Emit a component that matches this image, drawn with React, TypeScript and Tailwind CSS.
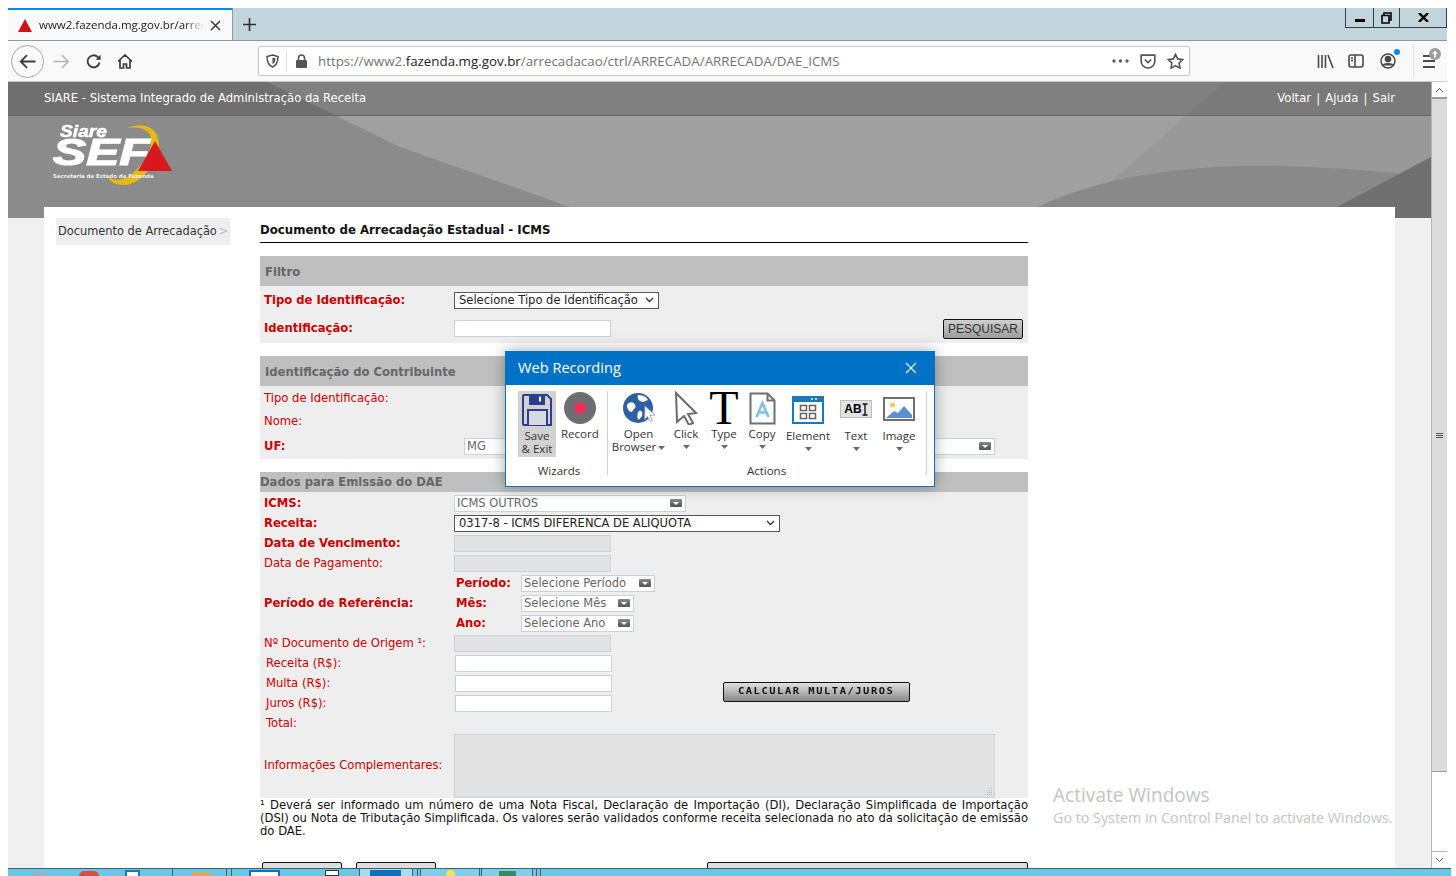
import React from "react";

const VERDANA = "font-['DejaVu_Sans',sans-serif]";
const UI = "font-['Open_Sans',sans-serif]";

const RED = "text-[#cc0000]";

const ArrowBox: React.FC = () => (
  <span className="flex h-[8px] w-[12px] shrink-0 items-center justify-center rounded-[1px] bg-gradient-to-b from-[#8a8a8a] to-[#555555]">
    <svg width="6" height="3" viewBox="0 0 6 3">
      <path d="M0 0h6L3 3z" fill="#ffffff" />
    </svg>
  </span>
);

const Chevron: React.FC = () => (
  <svg width="9" height="6" viewBox="0 0 9 6" fill="none" stroke="#333333" strokeWidth="1.3">
    <path d="M1 1l3.5 3.5L8 1" />
  </svg>
);

const FakeCombo: React.FC<{ text: string; className: string }> = ({ text, className }) => (
  <div className={`flex h-[17px] items-center justify-between border border-[#c6d3dd] bg-white pl-[2px] pr-[3px] text-[11.5px] text-[#666666] ${className}`}>
    <span className="whitespace-nowrap pt-[1px]">{text}</span>
    <ArrowBox />
  </div>
);

const NativeSelect: React.FC<{ text: string; className: string }> = ({ text, className }) => (
  <div className={`flex h-[17px] items-center justify-between border border-[#555555] bg-white pl-[4px] pr-[4px] text-[11.5px] text-[#222222] ${className}`}>
    <span className="whitespace-nowrap pt-[1px]">{text}</span>
    <Chevron />
  </div>
);

const Field: React.FC<{ disabled?: boolean; className?: string }> = ({ disabled, className = "" }) => (
  <div className={`h-[17px] w-[157px] border border-[#c6d3dd] ${disabled ? "bg-[#e2e2e2]" : "bg-white"} ${className}`} />
);

const Row: React.FC<{ label?: string; bold?: boolean; indent?: boolean; children?: React.ReactNode }> = ({
  label,
  bold,
  indent,
  children,
}) => (
  <div className="flex h-[20px] items-center">
    <div className={`w-[194px] shrink-0 whitespace-nowrap pt-[1px] ${indent ? "pl-[6px]" : "pl-[4px]"} ${RED} ${bold ? "font-bold" : ""}`}>{label}</div>
    {children}
  </div>
);

const SectionTitle: React.FC<{ text: string; className: string }> = ({ text, className }) => (
  <div className={`flex items-center bg-[#bfbfbf] font-bold text-[#666666] ${className}`}>{text}</div>
);

const PeriodLabel: React.FC<{ text: string }> = ({ text }) => (
  <div className={`ml-[2px] w-[65px] shrink-0 pt-[1px] font-bold ${RED}`}>{text}</div>
);

const BrowserTabs: React.FC = () => (
  <div className="flex h-[33px] items-stretch justify-between border-b border-[#8d9ba1] bg-[#c3d5dc]">
    <div className="flex">
      <div className="flex w-[225px] items-center border-r border-[#8d9ba1] border-t-2 border-t-[#0a84ff] bg-[#f9f9fa] pl-[10px]">
        <svg width="14" height="13" viewBox="0 0 14 13">
          <path d="M7 0l7 13H0z" fill="#cc1417" />
        </svg>
        <span className={`${UI} ml-[7px] w-[165px] overflow-hidden whitespace-nowrap text-[11.5px] text-[#222222] [mask-image:linear-gradient(to_right,black_88%,transparent)]`}>
          www2.fazenda.mg.gov.br/arrec
        </span>
        <svg width="11" height="11" viewBox="0 0 11 11" stroke="#3a3a3a" strokeWidth="1.5" className="ml-[6px]">
          <path d="M1 1l9 9M10 1l-9 9" />
        </svg>
      </div>
      <div className="flex w-[32px] items-center justify-center">
        <svg width="15" height="15" viewBox="0 0 15 15" stroke="#2e2e2e" strokeWidth="1.6">
          <path d="M7.5 1v13M1 7.5h13" />
        </svg>
      </div>
    </div>
    <div className="flex h-[20px] border-x border-b border-[#333f44] text-black">
      <div className="flex w-[28px] items-end justify-center border-r border-[#333f44] pb-[5px]">
        <div className="h-[3px] w-[10px] bg-black" />
      </div>
      <div className="flex w-[26px] items-center justify-center border-r border-[#333f44]">
        <svg width="11" height="12" viewBox="0 0 11 12" fill="none" stroke="#000000" strokeWidth="1.6">
          <path d="M3 3V1h7v7H8" />
          <path d="M1 3.5h7V11H1z" />
        </svg>
      </div>
      <div className="flex w-[46px] items-center justify-center">
        <svg width="11" height="9" viewBox="0 0 11 9" stroke="#000000" strokeWidth="2.4">
          <path d="M1 0l9 9M10 0L1 9" />
        </svg>
      </div>
    </div>
  </div>
);

const BrowserToolbar: React.FC = () => (
  <div className="flex h-[41px] items-center border-b border-[#cccccc] bg-[#f9f9fa] pl-[3px]">
    <div className="flex h-[33px] w-[33px] items-center justify-center rounded-full border border-[#a8a8a8] bg-[#f9f9fa]">
      <svg width="17" height="15" viewBox="0 0 17 15" fill="none" stroke="#3d3d3d" strokeWidth="1.8">
        <path d="M16.5 7.5H2M8 1.2L1.7 7.5 8 13.8" />
      </svg>
    </div>
    <svg width="17" height="15" viewBox="0 0 17 15" fill="none" stroke="#b3b3b3" strokeWidth="1.6" className="ml-[9px]">
      <path d="M.5 7.5H15M9 1.2l6.3 6.3L9 13.8" />
    </svg>
    <svg width="16" height="15" viewBox="0 0 16 15" fill="none" stroke="#3d3d3d" strokeWidth="1.9" className="ml-[16px]">
      <path d="M13.5 8.5a6 6 0 1 1-1.6-5.4L14 5" />
      <path d="M14.6.7v5h-5" fill="#3d3d3d" stroke="none" />
    </svg>
    <svg width="16" height="15" viewBox="0 0 16 15" fill="none" stroke="#3d3d3d" strokeWidth="1.7" className="ml-[15px]">
      <path d="M1 7.5L8 1l7 6.5M3 6v8h3.5v-4h3v4H13V6" />
    </svg>
    <div className={`${UI} ml-[125px] flex h-[30px] w-[932px] items-center rounded-[2px] border border-[#c6c6c6] bg-white text-[13.35px]`}>
      <svg width="13" height="14" viewBox="0 0 13 14" fill="none" className="ml-[7px]">
        <path d="M6.5 1L12 2.5C12 8 10 11.5 6.5 13 3 11.5 1 8 1 2.5z" stroke="#4f4f4f" strokeWidth="1.5" />
        <path d="M6.5 3.5L9.5 4.3c0 3-1 5-3 6z" fill="#4f4f4f" />
      </svg>
      <div className="ml-[7px] h-[22px] w-px bg-[#e2e2e2]" />
      <svg width="13" height="14" viewBox="0 0 13 14" className="ml-[8px]">
        <path d="M3.5 6V4a3 3 0 0 1 6 0v2" fill="none" stroke="#555555" strokeWidth="1.6" />
        <rect x="1" y="6" width="11" height="8" rx="1" fill="#555555" />
      </svg>
      <span className="ml-[10px] whitespace-nowrap text-[#737373]">
        https://www2.<span className="text-[#1e1e1e]">fazenda.mg.gov.br</span>/arrecadacao/ctrl/ARRECADA/ARRECADA/DAE_ICMS
      </span>
      <div className="ml-auto flex items-center">
        <svg width="17" height="4" viewBox="0 0 17 4" fill="#5c5c5c">
          <circle cx="2" cy="2" r="1.7" />
          <circle cx="8.5" cy="2" r="1.7" />
          <circle cx="15" cy="2" r="1.7" />
        </svg>
        <svg width="16" height="15" viewBox="0 0 16 15" fill="none" stroke="#555555" strokeWidth="1.7" className="ml-[11px]">
          <path d="M1.2 1.2h13.6v6a6.8 6.8 0 0 1-13.6 0z" />
          <path d="M4.8 5.5L8 8.5l3.2-3" />
        </svg>
        <svg width="17" height="16" viewBox="0 0 17 16" fill="none" stroke="#555555" strokeWidth="1.6" className="ml-[11px] mr-[5px]">
          <path d="M8.5 1.3l2.2 4.6 5 .7-3.6 3.5.9 5-4.5-2.4L4 15.1l.9-5L1.3 6.6l5-.7z" />
        </svg>
      </div>
    </div>
    <div className="ml-[127px] flex items-center">
      <svg width="17" height="15" viewBox="0 0 17 15" stroke="#4a4a4a" strokeWidth="1.6">
        <path d="M1.5 1v13M5 1v13M8.5 1v13M11 1l5 13" />
      </svg>
      <svg width="16" height="14" viewBox="0 0 16 14" fill="none" stroke="#4a4a4a" strokeWidth="1.6" className="ml-[14px]">
        <rect x="1" y="1" width="14" height="12" rx="2" />
        <path d="M7 1v12M3 4h2M3 6.5h2" />
      </svg>
      <div className="relative ml-[16px] h-[16px] w-[16px]">
        <svg width="16" height="16" viewBox="0 0 16 16" fill="none" stroke="#4a4a4a" strokeWidth="1.5">
          <circle cx="8" cy="8" r="7" />
          <circle cx="8" cy="6" r="2.6" fill="#4a4a4a" />
          <path d="M3 12.5c1-2.5 9-2.5 10 0" fill="#4a4a4a" />
        </svg>
        <div className="absolute right-[-4px] top-[-4px] h-[6px] w-[6px] rounded-full bg-[#0a84ff]" />
      </div>
      <div className="ml-[17px] h-[34px] w-px bg-[#e2e2e2]" />
      <div className="relative ml-[9px] flex h-[13px] w-[12px] flex-col justify-between">
        <div className="h-[2px] w-[7px] bg-[#4a4a4a]" />
        <div className="h-[2px] w-[12px] bg-[#4a4a4a]" />
        <div className="h-[2px] w-[12px] bg-[#4a4a4a]" />
        <svg width="12" height="12" viewBox="0 0 12 12" className="absolute right-[-6px] top-[-7px]">
          <circle cx="6" cy="6" r="6" fill="#9c9c9c" />
          <path d="M6 2.5L9 6H7v3.5H5V6H3z" fill="#ffffff" />
        </svg>
      </div>
    </div>
  </div>
);

const SiteHeader: React.FC = () => (
  <div className={`${VERDANA} relative h-[136px] shrink-0 overflow-hidden bg-[#8b8b8b] text-white`}>
    <svg width="1423" height="136" viewBox="0 0 1423 136" className="absolute left-0 top-0">
      <path d="M259 0L392 65L562 125L570 136H1423V0z" fill="#a0a0a0" />
      <path d="M1217 0L1074 125L1068 136H1423V0z" fill="#999999" />
      <path d="M1030 125C1100 90 1200 82 1274 84C1330 86 1390 90 1423 96V136H1010z" fill="#898989" />
      <path d="M1329 125L1423 75V136H1320z" fill="#6f6f6f" />
    </svg>
    <div className="relative flex h-[34px] items-center justify-between border-b border-[#666666] bg-black/20 pl-[36px] pr-[36px]">
      <span>SIARE - Sistema Integrado de Administração da Receita</span>
      <span className="[word-spacing:1.5px]">Voltar | Ajuda | Sair</span>
    </div>
    <div className="relative ml-[45px] mt-[7px] h-[65px] w-[122px]">
      <svg width="122" height="65" viewBox="0 0 122 65" className="absolute left-0 top-0">
        <path d="M75 5C85 0 104 0 106 20C106 40 85 64 70 62C62 62 56 58 55 54C62 58 72 58 80 50C92 40 100 25 98 14C96 6 85 3 75 5z" fill="#e5b90f" />
      </svg>
      <span className="absolute left-[7px] top-[1px] origin-left scale-x-[1.2] font-['Liberation_Sans',sans-serif] text-[16px] font-bold italic leading-[16px] text-white [-webkit-text-stroke:0.5px_white]">
        Siare
      </span>
      <span className="absolute left-[0px] top-[10px] origin-left scale-x-[1.38] font-['Liberation_Sans',sans-serif] text-[36px] font-bold italic leading-[40px] text-white [-webkit-text-stroke:1.2px_white]">
        SEF
      </span>
      <svg width="34" height="30" viewBox="0 0 34 30" className="absolute left-[85px] top-[18px]">
        <path d="M17 0l17 30H0z" fill="#d7191f" />
      </svg>
      <span className="absolute left-[0px] top-[49px] whitespace-nowrap text-[5.45px] font-bold leading-[8px] text-[#f0f0f0]">
        Secretaria de Estado de Fazenda
      </span>
    </div>
  </div>
);

const FiltroSection: React.FC = () => (
  <>
    <SectionTitle text="Filtro" className="mt-[13px] h-[30px] pl-[5px] pt-[3px]" />
    <div className="h-[57px] bg-[#eeeeee]">
      <div className="flex h-[28px] items-center">
        <div className={`w-[194px] pl-[4px] pt-[1px] font-bold ${RED}`}>Tipo de Identificação:</div>
        <NativeSelect text="Selecione Tipo de Identificação" className="w-[205px]" />
      </div>
      <div className="flex h-[29px] items-center justify-between pr-[5px]">
        <div className="flex items-center">
          <div className={`w-[194px] pl-[4px] pt-[1px] font-bold ${RED}`}>Identificação:</div>
          <Field />
        </div>
        <div className="flex h-[20px] w-[80px] items-center justify-center rounded-[2px] border border-[#111111] bg-gradient-to-b from-[#d0d0d0] to-[#9c9c9c] font-['Liberation_Sans',sans-serif] text-[12px] text-[#333333]">
          PESQUISAR
        </div>
      </div>
    </div>
  </>
);

const ContribuinteSection: React.FC = () => (
  <>
    <SectionTitle text="Identificação do Contribuinte" className="mt-[13px] h-[30px] pl-[5px] pt-[3px]" />
    <div className="h-[73px] bg-[#eeeeee]">
      <div className={`flex h-[24px] items-center pl-[4px] pt-[1px] ${RED}`}>Tipo de Identificação:</div>
      <div className={`flex h-[23px] items-center pl-[4px] ${RED}`}>Nome:</div>
      <div className="flex h-[26px] items-center">
        <div className={`w-[204px] pl-[4px] pt-[1px] font-bold ${RED}`}>UF:</div>
        <FakeCombo text="MG" className="w-[531px]" />
      </div>
    </div>
  </>
);

const DadosSection: React.FC = () => (
  <>
    <SectionTitle text="Dados para Emissão do DAE" className="mt-[13px] h-[20px] pt-[2px]" />
    <div className="h-[306px] bg-[#eeeeee]">
      <div className="h-[1px]" />
      <Row label="ICMS:" bold>
        <FakeCombo text="ICMS OUTROS" className="w-[232px]" />
      </Row>
      <Row label="Receita:" bold>
        <NativeSelect text="0317-8 - ICMS DIFERENCA DE ALIQUOTA" className="w-[326px]" />
      </Row>
      <Row label="Data de Vencimento:" bold>
        <Field disabled />
      </Row>
      <Row label="Data de Pagamento:">
        <Field disabled />
      </Row>
      <Row>
        <PeriodLabel text="Período:" />
        <FakeCombo text="Selecione Período" className="w-[134px]" />
      </Row>
      <Row label="Período de Referência:" bold>
        <PeriodLabel text="Mês:" />
        <FakeCombo text="Selecione Mês" className="w-[113px]" />
      </Row>
      <Row>
        <PeriodLabel text="Ano:" />
        <FakeCombo text="Selecione Ano" className="w-[113px]" />
      </Row>
      <Row label="Nº Documento de Origem ¹:">
        <Field disabled />
      </Row>
      <Row label="Receita (R$):" indent>
        <Field className="ml-[1px]" />
      </Row>
      <Row label="Multa (R$):" indent>
        <Field className="ml-[1px]" />
        <div className="ml-[111px] mt-[18px] flex h-[20px] w-[187px] items-center justify-center rounded-[2px] border border-[#111111] bg-gradient-to-b from-[#e0e0e0] to-[#8a8a8a] font-['DejaVu_Sans_Mono',monospace] text-[8px] font-bold text-[#111111]">
          <span className="scale-x-[1.3] whitespace-nowrap tracking-[1.2px]">CALCULAR MULTA/JUROS</span>
        </div>
      </Row>
      <Row label="Juros (R$):" indent>
        <Field className="ml-[1px]" />
      </Row>
      <Row label="Total:" indent />
      <div className="flex h-[65px] items-center">
        <div className={`w-[194px] shrink-0 whitespace-nowrap pl-[4px] pt-[1px] ${RED}`}>Informações Complementares:</div>
        <div className="relative h-[64px] w-[541px] border border-[#c6d3dd] bg-[#e2e2e2]">
          <svg width="8" height="8" viewBox="0 0 8 8" fill="#b5b5b5" className="absolute bottom-[1px] right-[1px]">
            <path d="M6 0h1v1H6zM4 2h1v1H4zM6 2h1v1H6zM2 4h1v1H2zM4 4h1v1H4zM6 4h1v1H6zM0 6h1v1H0zM2 6h1v1H2zM4 6h1v1H4zM6 6h1v1H6z" />
          </svg>
        </div>
      </div>
    </div>
  </>
);

const Caret: React.FC<{ className?: string }> = ({ className = "" }) => (
  <svg width="7" height="4" viewBox="0 0 7 4" className={className}>
    <path d="M0 0h7L3.5 4z" fill="#6a6a6a" />
  </svg>
);

const Tool: React.FC<{
  label: React.ReactNode;
  caret?: boolean;
  className?: string;
  labelClass?: string;
  children: React.ReactNode;
}> = ({ label, caret, className = "", labelClass = "mt-[2px]", children }) => (
  <div className={`flex flex-col items-center ${className}`}>
    <div className="flex h-[34px] items-center justify-center">{children}</div>
    <div className={`whitespace-nowrap text-center leading-[13px] ${labelClass}`}>{label}</div>
    {caret && <Caret className="mt-[5px]" />}
  </div>
);

const WebRecording: React.FC = () => (
  <div className={`${UI} absolute left-[505px] top-[351px] h-[136px] w-[430px] border border-[#0072c6] bg-white text-[11.5px] text-[#333333] shadow-[0_0_14px_rgba(0,0,0,0.35)]`}>
    <div className="flex h-[33px] items-center justify-between bg-[#0072c6] pb-[2px] pl-[12px] pr-[17px] text-[14.6px] text-white">
      <span>Web Recording</span>
      <svg width="12" height="12" viewBox="0 0 12 12" stroke="#ffffff" strokeWidth="1.1">
        <path d="M1 1l10 10M11 1L1 11" />
      </svg>
    </div>
    <div className="flex h-[102px]">
      <div className="flex w-[101px] flex-col pl-[12px] pt-[6px]">
        <div className="flex">
          <div className="flex h-[66px] w-[38px] flex-col items-center bg-[#d2d2d2] pt-[3px]">
            <svg width="30" height="32" viewBox="0 0 30 32" fill="none" stroke="#2c3e8f" strokeWidth="2">
              <path d="M2 1h23l4 4v26H2a1 1 0 0 1-1-1V2a1 1 0 0 1 1-1z" />
              <path d="M8 1v9h14V1" fill="#2c3e8f" />
              <path d="M17 2.5h2v5h-2z" fill="#ffffff" stroke="none" />
              <path d="M6 31V16h19v15" fill="#d9d9e2" />
            </svg>
            <div className="mt-[3px] text-center leading-[13px]">
              Save
              <br />
              &amp; Exit
            </div>
          </div>
          <div className="ml-[5px] mt-[1px] flex flex-col items-center">
            <svg width="32" height="32" viewBox="0 0 32 32">
              <circle cx="16" cy="16" r="16" fill="#6d6e71" />
              <circle cx="16" cy="16" r="6" fill="#ef3055" />
            </svg>
            <div className="mt-[1px] whitespace-nowrap">Record</div>
          </div>
        </div>
        <div className="mt-[5px] w-[82px] text-center">Wizards</div>
      </div>
      <div className="my-[6px] h-[84px] w-px bg-[#cfcfcf]" />
      <div className="flex w-[319px] flex-col">
        <div className="flex h-[76px] pt-[6px]">
          <Tool
            className="ml-[5px] w-[51px]"
            label={
              <>
                Open
                <br />
                Browser
                <Caret className="ml-[2px] inline align-middle" />
              </>
            }
          >
            <svg width="34" height="34" viewBox="0 0 34 34">
              <circle cx="16" cy="17" r="15" fill="#2f5fa3" />
              <path d="M5 14c3-4 7-3 8 0 2 3-2 4-3 7-3 0-5-3-5-7zM16 4c4 0 8 1 10 5-3 1-5 3-8 1-2-1-3-4-2-6zM17 20c3-1 4 2 3 5-1 2-3 3-4 4-1-3-1-7 1-9z" fill="#ffffff" />
              <path d="M23 15l10 9-5 .5 2.500 5-2.500 1-2.500-5-3 3z" fill="#ffffff" stroke="#9a9a9a" strokeWidth="0.8" />
            </svg>
          </Tool>
          <Tool className="ml-[4px] w-[36px]" label="Click" caret>
            <svg width="24" height="34" viewBox="0 0 24 34" fill="#ffffff" stroke="#6a6a6a" strokeWidth="2">
              <path d="M2 2l20 20-8 1 5 9-4 2-5-9-7 6z" />
            </svg>
          </Tool>
          <Tool className="ml-[2px] w-[36px]" label="Type" caret>
            <span className="font-['Liberation_Serif',serif] text-[48px] leading-[34px] text-black">T</span>
          </Tool>
          <Tool className="ml-[1px] w-[38px]" label="Copy" caret>
            <svg width="27" height="33" viewBox="0 0 27 33" fill="none">
              <path d="M1.500 1.500h17l7 7v23h-24z" stroke="#6f6f6f" strokeWidth="2" fill="#ffffff" />
              <path d="M18.500 1.500v7h7" stroke="#6f6f6f" strokeWidth="2" />
              <path d="M7.500 25l6-14 6 14M9.500 20.500h8" stroke="#7cbfe8" strokeWidth="2.500" />
            </svg>
          </Tool>
          <Tool className="ml-[4px] w-[46px]" labelClass="mt-[4px]" label="Element" caret>
            <svg width="32" height="28" viewBox="0 0 32 28" fill="none" className="mt-[4px]">
              <rect width="32" height="28" fill="#1a78bd" />
              <rect x="2" y="6" width="28" height="20" fill="#ffffff" />
              <circle cx="20" cy="3" r="1" fill="#ffffff" />
              <circle cx="24" cy="3" r="1" fill="#ffffff" />
              <circle cx="28" cy="3" r="1" fill="#ef3055" />
              <path d="M8.500 9.500h6v5h-6zM17.500 9.500h6v5h-6zM8.500 17.500h6v5h-6zM17.500 17.500h6v5h-6z" stroke="#666666" strokeWidth="1.500" />
            </svg>
          </Tool>
          <Tool className="ml-[5px] w-[40px]" labelClass="mt-[4px]" label="Text" caret>
            <div className="mt-[2px] flex h-[18px] w-[32px] items-center justify-center border border-[#bdbdbd] bg-[#e3e3e3] font-['Liberation_Sans',sans-serif] text-[12px] font-bold leading-none text-black">
              AB
              <svg width="6" height="13" viewBox="0 0 6 13" stroke="#111111" strokeWidth="1.4" fill="none">
                <path d="M.5 1h5M3 1v11M.5 12h5" />
              </svg>
            </div>
          </Tool>
          <Tool className="ml-[3px] w-[40px]" labelClass="mt-[4px]" label="Image" caret>
            <svg width="32" height="24" viewBox="0 0 32 24" fill="none" className="mt-[2px]">
              <rect x="1" y="1" width="30" height="22" stroke="#6f6f6f" strokeWidth="2" fill="#ffffff" />
              <circle cx="9.500" cy="8" r="2.500" fill="#f0cf65" />
              <path d="M3 21l8-7 4 2 6-7 8 9v3z" fill="#5b8fd0" />
            </svg>
          </Tool>
        </div>
        <div className="mt-[1px] pr-[2px] text-center">Actions</div>
      </div>
      <div className="my-[6px] ml-[-1px] h-[84px] w-px bg-[#cfcfcf]" />
    </div>
  </div>
);

const Scrollbar: React.FC = () => (
  <div className="flex w-[16px] shrink-0 flex-col border-l border-[#b5b5b5] bg-white">
    <div className="flex h-[17px] items-center justify-center border-b-2 border-[#9a9a9a]">
      <svg width="9" height="6" viewBox="0 0 9 6" fill="none" stroke="#555555">
        <path d="M1 5l3.500-3.500L8 5" />
      </svg>
    </div>
    <div className="flex h-[673px] items-center justify-center border-b border-[#9a9a9a] bg-[#dcdcdc]">
      <div className="flex flex-col gap-[1px]">
        <div className="h-px w-[7px] bg-[#555555]" />
        <div className="h-px w-[7px] bg-[#555555]" />
        <div className="h-px w-[7px] bg-[#555555]" />
      </div>
    </div>
    <div className="flex-1" />
    <div className="flex h-[17px] items-center justify-center border-t border-[#b5b5b5]">
      <svg width="9" height="6" viewBox="0 0 9 6" fill="none" stroke="#555555">
        <path d="M1 1l3.500 3.500L8 1" />
      </svg>
    </div>
  </div>
);

const Taskbar: React.FC = () => (
  <div className="relative flex h-[8px] shrink-0 overflow-hidden border-t border-[#505a60] bg-[#66c9ea]">
    <div className="ml-[24px] mt-[3px] h-[4px] w-[14px] bg-[#8fb7c4]" />
    <div className="ml-[33px] mt-[2px] h-[5px] w-[20px] rounded-t-full bg-[#d9503f]" />
    <div className="ml-[26px] mt-[1px] h-[6px] w-[15px] border-x-2 border-t-2 border-[#1b78c2] bg-white" />
    <div className="ml-[32px] h-full w-px bg-[#505a60]" />
    <div className="ml-[18px] mt-[3px] h-[4px] w-[20px] rounded-t-full bg-[#d9a95c]" />
    <div className="ml-[15px] h-full w-px bg-[#505a60]" />
    <div className="ml-[4px] h-full w-px bg-[#505a60]" />
    <div className="ml-[17px] mt-[1px] h-[6px] w-[31px] border-x-2 border-t-2 border-[#0b72c0] bg-white" />
    <div className="ml-[45px] mt-[1px] h-[6px] w-[14px] border border-[#333333] bg-white" />
    <div className="ml-[20px] h-full w-[54px] border-x border-[#505a60] bg-[#a3dff3] pl-[10px]">
      <div className="mt-[1px] h-[6px] w-[31px] bg-[#0b72c0]" />
    </div>
    <div className="ml-[4px] h-full w-px bg-[#505a60]" />
    <div className="ml-[2px] flex h-full w-[60px] justify-center border-x border-[#505a60] bg-[#7ad1ee]">
      <div className="mt-[1px] h-[6px] w-[9px] rounded-t-full bg-[#f5e34d]" />
    </div>
    <div className="ml-[1px] flex h-full w-[52px] justify-center border-x border-[#505a60] bg-[#7ad1ee]">
      <div className="mt-[2px] h-[5px] w-[17px] bg-[#2f8f5b]" />
    </div>
    <div className="ml-[3px] h-full w-px bg-[#505a60]" />
    <div className="ml-[3px] h-full w-px bg-[#505a60]" />
    <div className="absolute left-[1382px] top-[4px] font-['Open_Sans',sans-serif] text-[11px] leading-[14px] text-black">1:17 PM</div>
  </div>
);

export default function App() {
  return (
    <div className="relative h-[876px] w-[1456px] overflow-hidden bg-white pl-[8px] pt-[8px]">
      <div className="flex h-[860px] w-[1439px] flex-col">
        <BrowserTabs />
        <BrowserToolbar />
        <div className="flex min-h-0 flex-1">
          <div className={`${VERDANA} flex min-w-0 flex-1 flex-col bg-[#f0f0f0] text-[11.6px] text-[#222222]`}>
            <SiteHeader />
            <div className="relative -mt-[11px] ml-[36px] flex h-[661px] w-[1351px] overflow-hidden bg-white">
              <div className="ml-[12px] mt-[11px] flex h-[27px] w-[174px] shrink-0 items-center justify-between bg-[#eeeeee] pl-[2px] pr-[2px] text-[11.4px] text-[#333333]">
                <span className="whitespace-nowrap pt-[1px]">Documento de Arrecadação</span>
                <span className="text-[#bbbbbb]">&gt;</span>
              </div>
              <div className="ml-[30px] w-[768px] shrink-0 pt-[13px]">
                <div className="h-[23px] border-b border-black text-[11.75px] font-bold leading-[20px] text-[#111111]">
                  Documento de Arrecadação Estadual - ICMS
                </div>
                <FiltroSection />
                <ContribuinteSection />
                <DadosSection />
                <p className="mt-[1px] text-justify leading-[13px] text-[#111111]">
                  ¹ Deverá ser informado um número de uma Nota Fiscal, Declaração de Importação (DI), Declaração Simplificada de Importação (DSI) ou Nota de Tributação Simplificada. Os valores serão validados conforme receita selecionada no ato da solicitação de emissão do DAE.
                </p>
                <div className="mt-[24px] flex">
                  <div className="ml-[2px] h-[20px] w-[80px] rounded-[2px] border border-[#111111] bg-[#dddddd]" />
                  <div className="ml-[14px] h-[20px] w-[80px] rounded-[2px] border border-[#111111] bg-[#dddddd]" />
                  <div className="ml-[271px] h-[20px] w-[321px] rounded-[2px] border border-[#111111] bg-[#dddddd]" />
                </div>
              </div>
            </div>
          </div>
          <Scrollbar />
        </div>
      </div>
      <div className="absolute bottom-0 left-[8px] w-[1443px]">
        <Taskbar />
      </div>
      <WebRecording />
      <div className={`${UI} absolute left-[1053px] top-[783px] text-[#c4c4c4]`}>
        <div className="text-[19.1px] leading-[25px]">Activate Windows</div>
        <div className="text-[14.3px] leading-[20px]">Go to System in Control Panel to activate Windows.</div>
      </div>
    </div>
  );
}
